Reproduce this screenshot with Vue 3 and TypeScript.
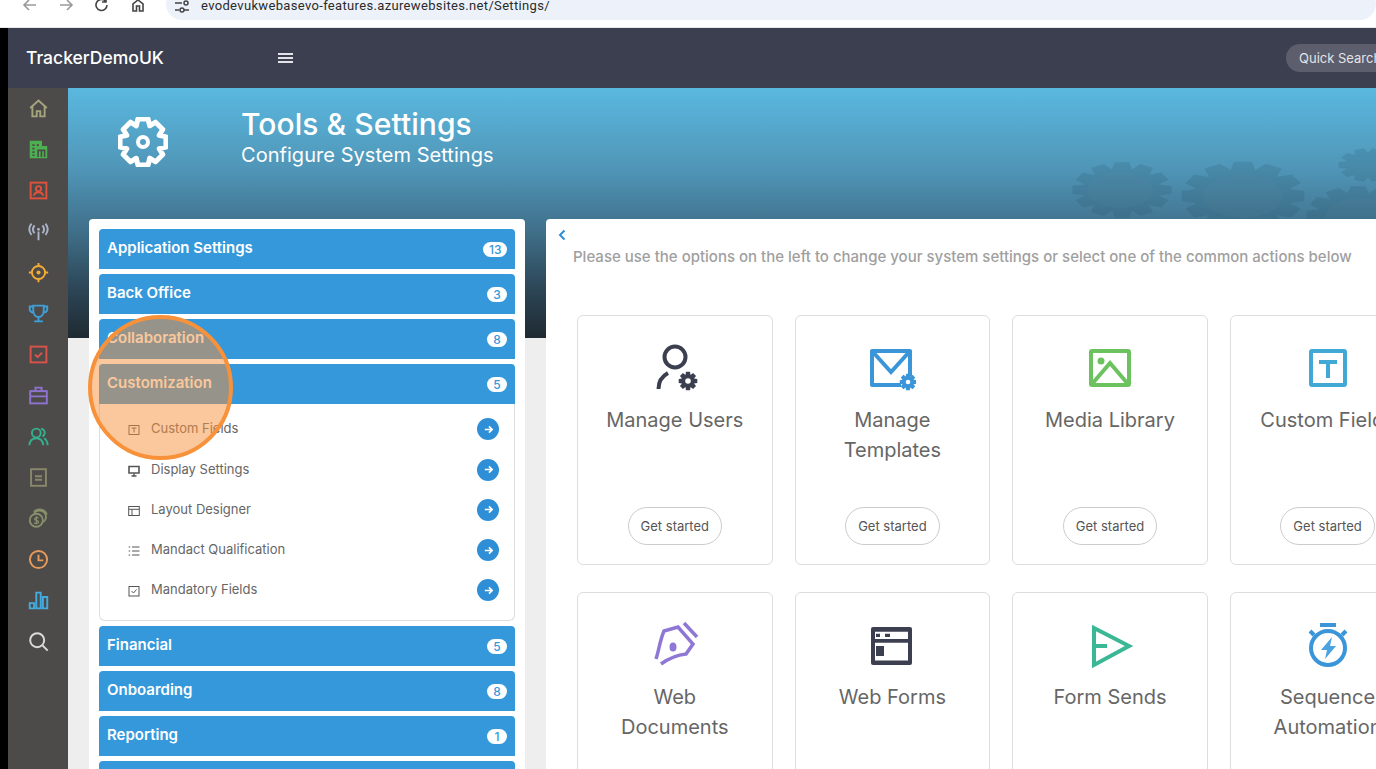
<script setup lang="ts">
function gear(cx: number, cy: number, ro: number, ri: number, teeth: number, sy = 1): string {
  const pts: string[] = []
  const step = (Math.PI * 2) / teeth
  for (let i = 0; i < teeth; i++) {
    const a = i * step
    const offs: [number, number][] = [
      [ri, -0.5],
      [ro, -0.28],
      [ro, 0.28],
      [ri, 0.5],
    ]
    for (const [r, o] of offs) {
      const t = a + o * step
      pts.push(`${(cx + r * Math.cos(t)).toFixed(2)} ${(cy + r * sy * Math.sin(t)).toFixed(2)}`)
    }
  }
  return 'M' + pts.join('L') + 'Z'
}

const rail = [
  { c: '#a3a57c', k: 'home' },
  { c: '#4cb050', k: 'building' },
  { c: '#e0523c', k: 'contact' },
  { c: '#a9b4c8', k: 'antenna' },
  { c: '#f4ab33', k: 'target' },
  { c: '#3f9fd8', k: 'trophy' },
  { c: '#d9534a', k: 'check' },
  { c: '#8e72cf', k: 'case' },
  { c: '#35b08e', k: 'users' },
  { c: '#87876a', k: 'doc' },
  { c: '#87906a', k: 'coins' },
  { c: '#e89a5b', k: 'clock' },
  { c: '#45aadd', k: 'bars' },
  { c: '#dcdcdc', k: 'search' },
]

const topGroups = [
  { name: 'Application Settings', n: 13 },
  { name: 'Back Office', n: 3 },
  { name: 'Collaboration', n: 8 },
  { name: 'Customization', n: 5 },
]
const bottomGroups = [
  { name: 'Financial', n: 5 },
  { name: 'Onboarding', n: 8 },
  { name: 'Reporting', n: 1 },
  { name: 'Security', n: 4 },
]
const subItems = [
  { name: 'Custom Fields', k: 'field' },
  { name: 'Display Settings', k: 'display' },
  { name: 'Layout Designer', k: 'layout' },
  { name: 'Mandact Qualification', k: 'list' },
  { name: 'Mandatory Fields', k: 'checked' },
]
const cards = [
  { lines: ['Manage Users'], k: 'users' },
  { lines: ['Manage', 'Templates'], k: 'mail' },
  { lines: ['Media Library'], k: 'media' },
  { lines: ['Custom Fields'], k: 'text' },
  { lines: ['Web', 'Documents'], k: 'pen' },
  { lines: ['Web Forms'], k: 'form' },
  { lines: ['Form Sends'], k: 'send' },
  { lines: ['Sequence', 'Automation'], k: 'watch' },
]
const bgGears = [
  gear(1054, 102, 50, 38, 12, 0.56),
  gear(1175, 108, 62, 48, 12, 0.56),
  gear(1290, 127, 52, 40, 12, 0.56),
  gear(1300, 77, 30, 22, 10, 0.56),
]
const heroGear = gear(25, 25, 23.5, 17.5, 8)
const smallGear = gear(37, 37, 9.5, 6.5, 8)
const mailGear = gear(40, 38, 8.5, 6, 8)
</script>

<template>
  <div class="page">
    <div class="chrome">
      <svg class="nav-ic" viewBox="0 0 16 16"><path d="M14 5H3M7 0 2 5l5 5" stroke="#9a9a9a" /></svg>
      <svg class="nav-ic" viewBox="0 0 16 16"><path d="M2 5h11M9 0l5 5-5 5" stroke="#9a9a9a" /></svg>
      <svg class="nav-ic" viewBox="0 0 16 16"><path d="M13 5a5.500 5.500 0 1 1-1.500-3.800M12 -2v4H8" stroke="#444" /></svg>
      <svg class="nav-ic" viewBox="0 0 16 16"><path d="M3 11V4l5-4 5 4v7H9.500V6h-3v5Z" stroke="#444" /></svg>
      <div class="omnibox">
        <svg class="tune" viewBox="0 0 14 14"><path d="M0 1h7M0 8h4M9 8h5" stroke="#444" /><circle cx="11" cy="1" r="2" stroke="#444" /><circle cx="7" cy="8" r="2" stroke="#444" /></svg>
        <span class="url">evodevukwebasevo-features.azurewebsites.net/Settings/</span>
      </div>
    </div>

    <div class="shell">
      <div class="strip"></div>
      <div class="window">
        <header class="topbar">
          <span class="brand">TrackerDemoUK</span>
          <span class="burger"><i></i><i></i><i></i></span>
          <span class="quick">Quick Search</span>
        </header>

        <div class="body">
          <nav class="rail">
            <div v-for="r in rail" :key="r.k" class="rail-item" :style="{ color: r.c }">
              <svg viewBox="0 0 24 24" class="rail-ic">
                <template v-if="r.k === 'home'"><path d="M2.500 11.500 12 3l9.500 8.500M5 9.500V21h5v-6h4v6h5V9.500" /></template>
                <template v-else-if="r.k === 'building'"><path class="solid" d="M2 2h14v6h6v14H2Z" /><path class="cut" d="M5 7h2.500M10 7h2.500M5 11h2.500M5 15h2.500M5 18.500h2.500M11.500 20.500v-7.500h7.500v7.500M15.300 13v7.500" /></template>
                <template v-else-if="r.k === 'contact'"><rect x="3" y="3" width="18" height="18" /><circle cx="12" cy="10" r="3" /><path d="M6.500 18c1-3 3-4 5.500-4s4.500 1 5.500 4" /></template>
                <template v-else-if="r.k === 'antenna'"><circle cx="12" cy="9.500" r="1.600" class="fill" /><path d="M12 12v10M7.500 5c-2.500 3-2.500 6 0 9M16.500 5c2.500 3 2.500 6 0 9M4 3C.5 7.500.5 11.500 4 16M20 3c3.500 4.500 3.500 8.500 0 13" /></template>
                <template v-else-if="r.k === 'target'"><circle cx="12" cy="12" r="7.500" /><circle cx="12" cy="12" r="2.300" class="fill" /><path d="M12 1v3.500M12 19.500V23M1 12h3.500M19.500 12H23" /></template>
                <template v-else-if="r.k === 'trophy'"><path d="M6 3h12v5c0 5-2.500 8-6 8s-6-3-6-8ZM12 16v4M7 21h10" /><path d="M6 4H2v3c0 2 2 4 4 4M18 4h4v3c0 2-2 4-4 4" /></template>
                <template v-else-if="r.k === 'check'"><rect x="3" y="3" width="18" height="18" /><path d="m8 12 3 3 5-5" /></template>
                <template v-else-if="r.k === 'case'"><rect x="2.500" y="7" width="19" height="14" /><path d="M8.500 7V3h7v4M2.500 13h19M12 12.500v1.500" /></template>
                <template v-else-if="r.k === 'users'"><circle cx="9.500" cy="8" r="5" /><path d="M1.500 22c.5-5 3.500-8 8-8s7.500 3 8 8M15 3.200c3 .5 4.500 3 4 5.500-.3 1.500-1.300 2.800-2.500 3.300M18.500 14c2.500 1.500 3.700 4.500 4 8" /></template>
                <template v-else-if="r.k === 'doc'"><rect x="3.500" y="2.500" width="17" height="19" /><path d="M8 10.500h8M8 14.500h8" /></template>
                <template v-else-if="r.k === 'coins'"><circle cx="9.500" cy="14" r="7.500" /><path d="M7 5.500c3-3.500 9-3.500 11.500-.5 3 3 3 8-1 11M7 4.500c1-2 5-3.500 8.500-2.500 3 1 5 3 6 5.500" /><path class="thin" d="M12 11.500c-1-1-4.500-1-4.500 1 0 2.500 4.500 1 4.500 3.500 0 2-3.500 2-5 .8M9.500 9.500v9" /></template>
                <template v-else-if="r.k === 'clock'"><circle cx="12" cy="12" r="9.800" /><path d="M12 6.500V13h5.500" /></template>
                <template v-else-if="r.k === 'bars'"><path d="M2 15h5v6H2ZM9.500 3h5v18h-5ZM17 8h5v13h-5Z" /></template>
                <template v-else><circle cx="10.500" cy="10.500" r="8" /><path d="m16.500 16.500 6 6" /></template>
              </svg>
            </div>
          </nav>

          <main class="content">
            <section class="hero">
              <svg class="hero-bg" viewBox="0 0 1308 250" aria-hidden="true">
                <path v-for="(d, i) in bgGears" :key="i" :d="d" />
                <ellipse class="hole" cx="1052" cy="102" rx="33" ry="18" />
                <ellipse class="hole" cx="1175" cy="108" rx="40" ry="22" />
                <ellipse class="hole" cx="1290" cy="127" rx="32" ry="17" />
              </svg>
              <svg class="hero-gear" viewBox="0 0 50 50">
                <path :d="heroGear" stroke-linejoin="round" />
                <circle cx="25" cy="25" r="5" />
              </svg>
              <div class="hero-text">
                <h1>Tools &amp; Settings</h1>
                <p>Configure System Settings</p>
              </div>
            </section>

            <div class="panels">
              <aside class="menu">
                <div v-for="g in topGroups" :key="g.name" class="group">
                  <span class="group-name">{{ g.name }}</span><b class="badge">{{ g.n }}</b>
                </div>
                <div class="subs">
                  <div v-for="s in subItems" :key="s.k" class="sub">
                    <svg class="sub-ic" viewBox="0 0 12 12">
                      <template v-if="s.k === 'field'"><rect x="1" y="1.500" width="10" height="9" /><path d="M3.500 4h5M6 4v4.500" /></template>
                      <template v-else-if="s.k === 'display'"><path d="M1 1.500h10v6.500H1Z" stroke-width="1.600" /><path d="M6 8.500v2M3.500 11h5" stroke-width="1.400" /></template>
                      <template v-else-if="s.k === 'layout'"><rect x=".7" y="1.500" width="10.600" height="9" /><path d="M.7 4.300h10.600M4 4.300v6.200" /></template>
                      <template v-else-if="s.k === 'list'"><path d="M4 2h7.500M4 6h7.500M4 10h7.500M.7 2h1.500M.7 6h1.500M.7 10h1.500" /></template>
                      <template v-else><rect x="1" y="1.500" width="10" height="9.500" /><path d="m3.500 6 2 2 3-3.500" /></template>
                    </svg>
                    <span class="sub-name">{{ s.name }}</span>
                    <span class="go">
                      <svg viewBox="0 0 12 12"><path d="M2 6h8M6.500 2.500 10 6l-3.500 3.500" /></svg>
                    </span>
                  </div>
                </div>
                <div v-for="g in bottomGroups" :key="g.name" class="group">
                  <span class="group-name">{{ g.name }}</span><b class="badge">{{ g.n }}</b>
                </div>
                <span class="spot"></span>
              </aside>

              <section class="board">
                <svg class="back" viewBox="0 0 10 12"><path d="M7.500 1.500 3 6l4.500 4.500" /></svg>
                <p class="intro">Please use the options on the left to change your system settings or select one of the common actions below</p>
                <div class="cards">
                  <article v-for="c in cards" :key="c.k" class="card">
                    <svg class="card-ic" viewBox="0 0 48 48">
                      <template v-if="c.k === 'users'">
                        <g class="ink"><circle cx="24" cy="13" r="10.500" /><path d="M7.500 45c0-7 3-12.500 9.500-16" /></g>
                        <path :d="smallGear" fill="#3c3f50" /><circle cx="37" cy="37" r="2.800" fill="#fff" />
                      </template>
                      <template v-else-if="c.k === 'mail'">
                        <g class="sky"><path d="M33 41H4V7h38v25" stroke-linejoin="round" /><path d="m4 7 19 21L42 7" /></g>
                        <path :d="mailGear" fill="#3a96d9" /><circle cx="40" cy="38" r="2.300" fill="#fff" />
                      </template>
                      <template v-else-if="c.k === 'media'">
                        <g class="leaf"><rect x="5" y="7" width="38" height="34" rx="1" /><path d="m6 40 18-21 18 21" /></g>
                        <circle cx="15" cy="17" r="3.500" fill="#6cc25e" />
                      </template>
                      <template v-else-if="c.k === 'text'">
                        <g class="aqua"><rect x="7" y="7" width="34" height="34" rx="1" /><path d="M15 18h18M24 18v16" /></g>
                      </template>
                      <template v-else-if="c.k === 'pen'">
                        <g class="violet"><path d="M5 38c3-9 4-19 8-28l14-4 15 17-7 10c-10 1-18 5-25 10" /><path d="M33 2l13 14" /></g>
                        <ellipse cx="22" cy="26" rx="3.500" ry="4.500" fill="#8f77d6" />
                      </template>
                      <template v-else-if="c.k === 'form'">
                        <rect x="3" y="6" width="41" height="38" rx="2" fill="#3c3f50" />
                        <path d="M7 10.700h33V18H7ZM7 21.700h33v17.800H7Z" fill="#fff" />
                        <path d="M8 12.700h4V16H8ZM17 12.700h5V16h-5ZM8 25h8v10H8Z" fill="#3c3f50" />
                      </template>
                      <template v-else-if="c.k === 'send'">
                        <g class="mint"><path d="M8 7 43 25 8 44ZM8 25h13" /></g>
                      </template>
                      <template v-else>
                        <g class="sky"><circle cx="24" cy="27" r="17" /><path d="M16 4h16M6 10l4 4M42 10l-4 4" /></g>
                        <path d="M28 16 17 29h6l-2 9 11-13h-6Z" fill="#4aa3e0" />
                      </template>
                    </svg>
                    <h3 class="card-title"><span v-for="l in c.lines" :key="l">{{ l }}</span></h3>
                    <button class="start" type="button">Get started</button>
                  </article>
                </div>
              </section>
            </div>
          </main>
        </div>
      </div>
    </div>
  </div>
</template>

<style>
html, body { margin: 0; height: 769px; overflow: hidden; background: #fff; }
</style>

<style scoped>
.page { width: 1376px; height: 769px; overflow: hidden; display: flex; flex-direction: column; font-family: Inter, "Liberation Sans", sans-serif; }
.chrome { height: 28px; flex: none; background: #fff; display: flex; align-items: flex-start; overflow: hidden; border-bottom: 1px solid #e9e9e9; box-sizing: border-box; }
.nav-ic { width: 16px; height: 16px; margin-left: 22px; margin-right: -2px; fill: none; stroke-width: 1.600; overflow: visible; flex: none; }
.omnibox { margin-left: 22px; margin-top: -12px; height: 32px; flex: 1; background: #edf2fa; border-radius: 17px; display: flex; align-items: center; padding-left: 9px; }
.tune { width: 14px; height: 14px; fill: none; stroke-width: 1.500; overflow: visible; margin-top: 10px; }
.url { margin-left: 12px; font: 13px Roboto, sans-serif; letter-spacing: .34px; color: #2a2a2a; margin-top: 2px; }

.shell { flex: 1; display: flex; min-height: 0; }
.strip { width: 8px; background: #000; flex: none; }
.window { flex: 1; min-width: 0; display: flex; flex-direction: column; }

.topbar { height: 60px; flex: none; background: #3c3f50; display: flex; align-items: center; padding-left: 18px; color: #fff; overflow: hidden; }
.brand { font-size: 17.500px; font-weight: 500; width: 252px; margin-top: -2px; }
.burger { display: flex; flex-direction: column; gap: 2px; width: 15px; margin-top: -1px; }
.burger i { height: 2px; background: #e4e4e8; }
.quick { margin-left: auto; margin-right: -40px; height: 28px; width: 130px; box-sizing: border-box; padding-left: 13px; border-radius: 14px; background: #5c5e6d; color: #e3e3e6; font-size: 13px; line-height: 28px; flex: none; }

.body { flex: 1; display: flex; min-height: 0; }
.rail { width: 60px; flex: none; background: #4d4b49; display: flex; flex-direction: column; }
.rail-item { height: 41px; flex: none; display: flex; align-items: center; justify-content: center; }
.rail-ic { width: 21px; height: 21px; fill: none; stroke: currentColor; stroke-width: 2.200; }
.rail-ic .solid { fill: currentColor; stroke: none; }
.rail-ic .cut { stroke: #4d4b49; stroke-width: 1.800; }
.rail-ic .fill { fill: currentColor; stroke: none; }
.rail-ic .thin { stroke-width: 1.400; }

.content { flex: 1; min-width: 0; background: #eee; overflow: hidden; }
.hero { position: relative; height: 250px; background: linear-gradient(#5ab8df 0%, #5096b8 32%, #3f6e88 58%, #2b4353 82%, #1f2a32 100%); display: flex; align-items: flex-start; overflow: hidden; }
.hero-bg { position: absolute; left: 0; top: 0; width: 1308px; height: 250px; fill: rgba(28, 66, 88, .15); }
.hero-bg .hole { fill: rgba(110, 150, 170, .08); }
.hero-gear { width: 50px; height: 50px; margin: 29px 0 0 50px; fill: none; stroke: #fff; stroke-width: 5; flex: none; position: relative; }
.hero-gear circle { stroke-width: 4; }
.hero-text { margin: 18px 0 0 73px; color: #fff; position: relative; }
.hero-text h1 { margin: 0; font-size: 30px; font-weight: 500; line-height: 37px; letter-spacing: .07px; }
.hero-text p { margin: 0; font-size: 20px; font-weight: 400; line-height: 25px; letter-spacing: .04px; }

.panels { display: flex; align-items: flex-start; margin-top: -119px; padding-left: 21px; gap: 21px; position: relative; }
.menu { position: relative; width: 436px; flex: none; box-sizing: border-box; padding: 10px; background: #fff; border-radius: 4px; display: flex; flex-direction: column; gap: 5px; height: 600px; }
.group { height: 40px; flex: none; background: #3498db; border-radius: 4px 4px 0 0; color: #fff; font-size: 15px; font-weight: 600; display: flex; align-items: center; justify-content: space-between; padding: 0 8px; }
.group-name { margin-top: -3px; }
.badge { min-width: 20px; padding: 0 5.500px; box-sizing: border-box; height: 15px; line-height: 15px; border-radius: 8px; background: #fff; color: #3498db; font-size: 12px; font-weight: 500; text-align: center; margin-top: 1px; }
.subs { margin-top: -5px; height: 217px; flex: none; box-sizing: border-box; border: 1px solid #ddd; border-top: 0; border-radius: 0 0 6px 6px; padding-top: 5.400px; }
.sub { height: 40.200px; display: flex; align-items: center; padding-left: 28px; padding-right: 15px; color: #666; font-size: 13px; }
.sub-ic { width: 12px; height: 12px; flex: none; fill: none; stroke: #555; stroke-width: 1; margin-top: 2px; }
.sub-name { margin-left: 11px; flex: 1; margin-top: -2px; }
.go { width: 22px; height: 22px; border-radius: 50%; background: #2f8fd6; display: flex; align-items: center; justify-content: center; }
.go svg { width: 11px; height: 11px; fill: none; stroke: #fff; stroke-width: 1.800; }
.spot { position: absolute; left: -1px; top: 96px; width: 145px; height: 145px; box-sizing: border-box; border-radius: 50%; border: 4px solid #f7923a; background: rgba(247, 143, 58, .5); }

.board { width: 900px; flex: none; background: #fff; border-radius: 4px 0 0 4px; height: 600px; padding: 9px 0 0 27px; box-sizing: border-box; position: relative; }
.back { position: absolute; left: 11px; top: 10px; width: 10px; height: 12px; fill: none; stroke: #2f8fd6; stroke-width: 2; }
.intro { margin: 19px 0 0; font-size: 15px; line-height: 20px; font-weight: 500; color: #9f9f9f; white-space: nowrap; }
.cards { margin: 48px 0 0 4px; display: grid; grid-template-columns: repeat(4, 195.6px); column-gap: 22px; row-gap: 27px; }
.card { height: 249.500px; box-sizing: border-box; border: 1px solid #ddd; border-radius: 6px; display: flex; flex-direction: column; align-items: center; padding-top: 28px; }
.card-ic { width: 48px; height: 48px; flex: none; fill: none; }
.card-ic .ink { stroke: #3c3f50; stroke-width: 4; }
.card-ic .sky { stroke: #3a96d9; stroke-width: 4; }
.card-ic .leaf { stroke: #6cc25e; stroke-width: 4; }
.card-ic .aqua { stroke: #42a9d6; stroke-width: 4; }
.card-ic .violet { stroke: #8f77d6; stroke-width: 3.500; }
.card-ic .mint { stroke: #3ab795; stroke-width: 4; }
.card-title { margin: 13px 0 0; height: 60px; font-size: 20px; line-height: 30px; font-weight: 400; color: #666; text-align: center; display: flex; flex-direction: column; white-space: nowrap; }
.start { margin-top: 41.500px; height: 38px; width: 94.500px; border: 1px solid #ccc; border-radius: 19px; background: #fff; color: #555; font: 13px Inter, sans-serif; padding: 0; flex: none; }
</style>
